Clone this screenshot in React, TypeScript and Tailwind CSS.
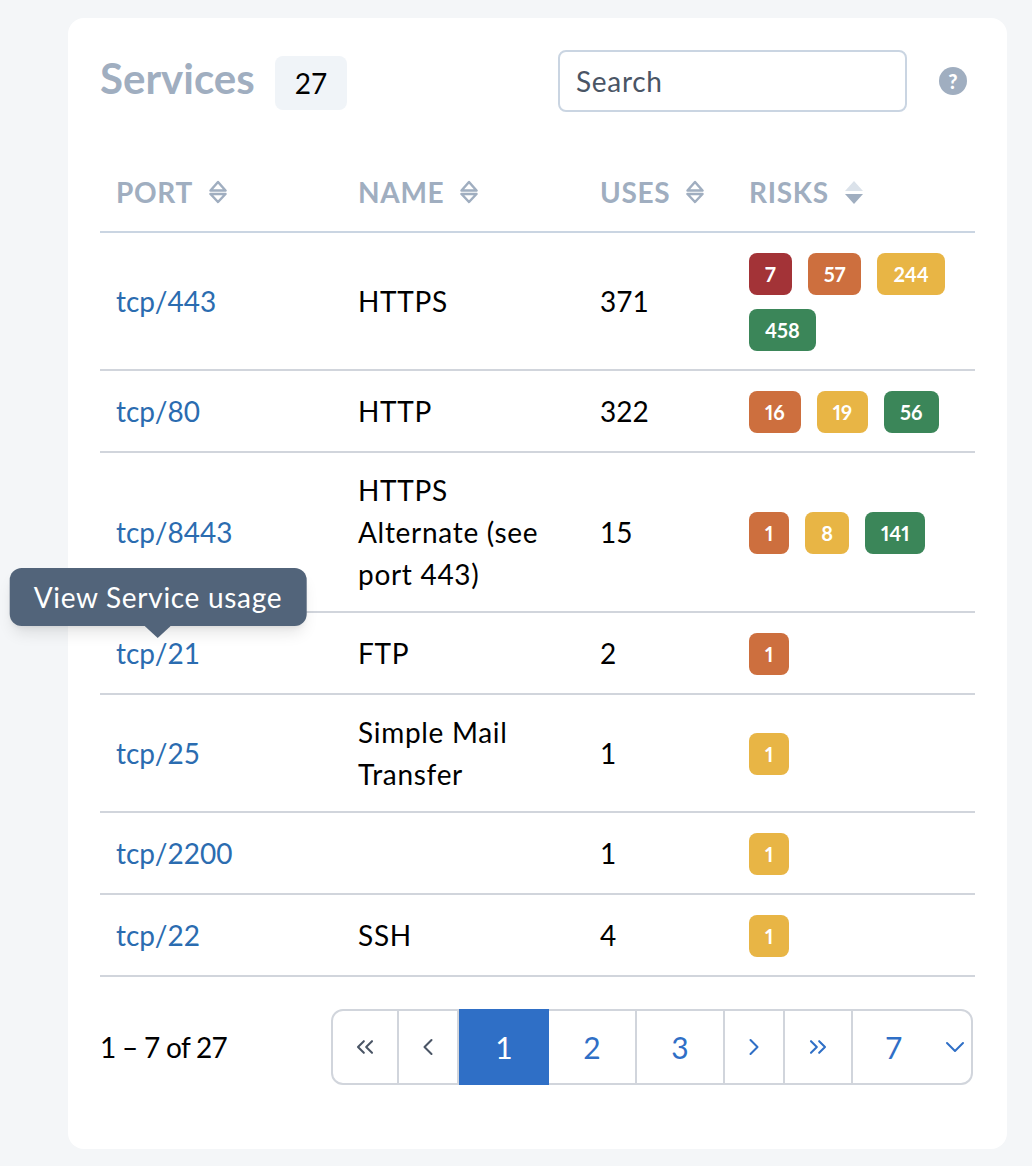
import React from 'react';
import { ChevronDown, ChevronLeft, ChevronRight, ChevronsLeft, ChevronsRight } from 'lucide-react';

type Risk = { n: number; level: 'critical' | 'high' | 'medium' | 'low' };

const riskColors = {
  critical: 'bg-[#a33337]',
  high: 'bg-[#cd6f3e]',
  medium: 'bg-[#e8b545]',
  low: 'bg-[#3b8659]',
};

const services: { port: string; name: string; uses: number; risks: Risk[] }[] = [
  {
    port: 'tcp/443',
    name: 'HTTPS',
    uses: 371,
    risks: [
      { n: 7, level: 'critical' },
      { n: 57, level: 'high' },
      { n: 244, level: 'medium' },
      { n: 458, level: 'low' },
    ],
  },
  {
    port: 'tcp/80',
    name: 'HTTP',
    uses: 322,
    risks: [
      { n: 16, level: 'high' },
      { n: 19, level: 'medium' },
      { n: 56, level: 'low' },
    ],
  },
  {
    port: 'tcp/8443',
    name: 'HTTPS Alternate (see port 443)',
    uses: 15,
    risks: [
      { n: 1, level: 'high' },
      { n: 8, level: 'medium' },
      { n: 141, level: 'low' },
    ],
  },
  { port: 'tcp/21', name: 'FTP', uses: 2, risks: [{ n: 1, level: 'high' }] },
  { port: 'tcp/25', name: 'Simple Mail Transfer', uses: 1, risks: [{ n: 1, level: 'medium' }] },
  { port: 'tcp/2200', name: '', uses: 1, risks: [{ n: 1, level: 'medium' }] },
  { port: 'tcp/22', name: 'SSH', uses: 4, risks: [{ n: 1, level: 'medium' }] },
];

const SortIcon: React.FC<{ active?: boolean }> = ({ active }) => (
  <svg width="18" height="24" viewBox="0 0 18 24" className="ml-4">
    {active ? (
      <>
        <path d="M9 1 18 11H0Z" fill="#dbe2ea" />
        <path d="M0 14H18L9 24Z" fill="#a0aec0" />
      </>
    ) : (
      <>
        <path d="M9 2 16.5 10.5H1.5Z" fill="none" stroke="#a0aec0" strokeWidth="2.5" strokeLinejoin="round" />
        <path d="M1.5 14H16.5L9 22Z" fill="none" stroke="#a0aec0" strokeWidth="2.5" strokeLinejoin="round" />
      </>
    )}
  </svg>
);

const Th: React.FC<{ label: string; active?: boolean }> = ({ label, active }) => (
  <th className="h-20 px-4 py-4 text-left font-bold uppercase tracking-wide text-[#a0aec0]">
    <div className="flex items-center">
      {label}
      <SortIcon active={active} />
    </div>
  </th>
);

const Tooltip = () => (
  <div className="absolute bottom-full left-1/2 mb-1.5 -translate-x-1/2 whitespace-nowrap rounded-xl bg-[#52647a] px-6 py-2 tracking-wide text-white shadow-lg">
    View Service usage
    <svg width="26" height="12" viewBox="0 0 26 12" className="absolute left-1/2 top-full -translate-x-1/2">
      <path d="M0 0H26L13 12Z" fill="#52647a" />
    </svg>
  </div>
);

const PageCell: React.FC<{ className?: string; children: React.ReactNode }> = ({ className, children }) => (
  <div className={`flex items-center justify-center border-y-2 border-r-2 border-gray-300 ${className}`}>{children}</div>
);

export default function App() {
  return (
    <div className="min-h-screen bg-[#f4f6f8] pb-4 pt-[18px] font-['Lato',sans-serif] text-[28px] leading-normal text-black">
      <div className="ml-[68px] mr-[25px] rounded-2xl bg-white px-8 pb-16 pt-8">
        <div className="flex items-center">
          <h2 className="pb-1.5 text-[42px] font-bold leading-tight text-[#a0aec0]">Services</h2>
          <span className="ml-5 mt-1 rounded-lg bg-[#f0f4f8] px-5 py-1.5">27</span>
          <div className="ml-auto flex items-center gap-8 pr-2">
            <input
              placeholder="Search"
              className="w-[349px] rounded-lg border-2 border-slate-300 bg-white px-4 py-2 tracking-wide outline-none placeholder:text-gray-600"
            />
            <span className="flex size-7 items-center justify-center rounded-full bg-[#a0aec0] text-xl font-black text-white">
              ?
            </span>
          </div>
        </div>

        <table className="mt-10 w-full table-fixed">
          <colgroup>
            <col className="w-[242px]" />
            <col className="w-[242px]" />
            <col className="w-[149px]" />
            <col />
          </colgroup>
          <thead>
            <tr className="border-b-2 border-slate-300">
              <Th label="Port" />
              <Th label="Name" />
              <Th label="Uses" />
              <Th label="Risks" active />
            </tr>
          </thead>
          <tbody>
            {services.map((s) => (
              <tr key={s.port} className="border-b-2 border-gray-300">
                <td className="px-4 py-4 text-[#2b6cb0]">
                  <span className="relative inline-block">
                    {s.port}
                    {s.port === 'tcp/21' && <Tooltip />}
                  </span>
                </td>
                <td className="py-4 pl-4 pr-6 tracking-wide">{s.name}</td>
                <td className="px-4 py-4">{s.uses}</td>
                <td className="py-4 pl-4">
                  <div className="flex flex-wrap gap-x-4 gap-y-3.5 pb-0.5 pt-1">
                    {s.risks.map((r, i) => (
                      <span
                        key={i}
                        className={`rounded-lg px-4 py-1.5 text-xl font-bold leading-normal text-white proportional-nums ${riskColors[r.level]}`}
                      >
                        {r.n}
                      </span>
                    ))}
                  </div>
                </td>
              </tr>
            ))}
          </tbody>
        </table>

        <div className="mt-8 flex items-center justify-between pr-0.5">
          <span className="tracking-tight">1 – 7 of 27</span>
          <div className="flex h-[76px] text-[#2f6fc6]">
            <PageCell className="w-17 rounded-l-xl border-l-2 text-gray-600">
              <ChevronsLeft className="size-7" strokeWidth={1.75} />
            </PageCell>
            <PageCell className="w-15 text-gray-600">
              <ChevronLeft className="size-7" strokeWidth={1.75} />
            </PageCell>
            <div className="flex w-[90px] items-center justify-center bg-[#2f6fc6] text-3xl text-white">1</div>
            <PageCell className="w-22 text-3xl">2</PageCell>
            <PageCell className="w-22 text-3xl">3</PageCell>
            <PageCell className="w-15">
              <ChevronRight className="size-7" strokeWidth={1.75} />
            </PageCell>
            <PageCell className="w-17">
              <ChevronsRight className="size-7" strokeWidth={1.75} />
            </PageCell>
            <div className="flex w-30 items-center justify-between rounded-r-xl border-y-2 border-r-2 border-gray-300 pl-8 text-3xl">
              7
              <ChevronDown className="size-8" strokeWidth={1.5} />
            </div>
          </div>
        </div>
      </div>
    </div>
  );
}
